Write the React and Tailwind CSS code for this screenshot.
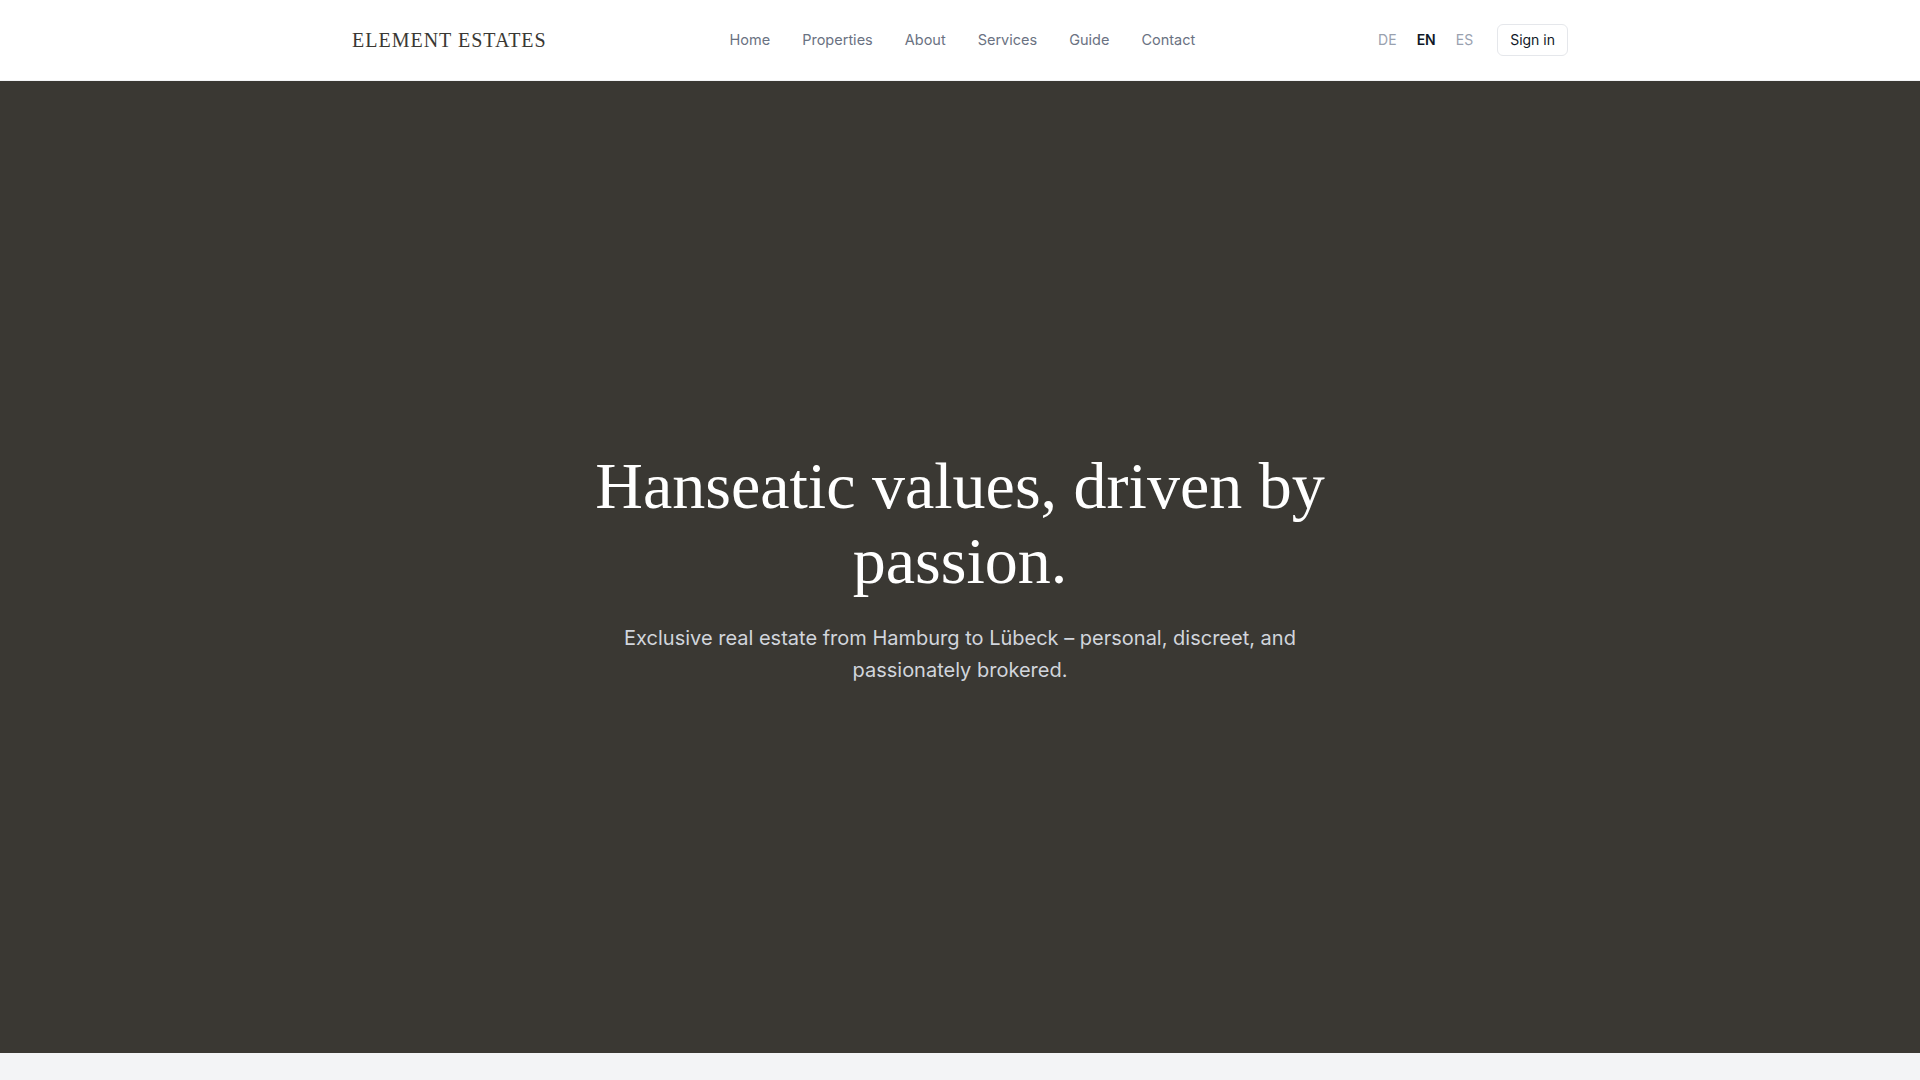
import React from 'react';

const NAV_LINKS = ['Home', 'Properties', 'About', 'Services', 'Guide', 'Contact'];
const LANGS = ['DE', 'EN', 'ES'];

const serif = { fontFamily: '"Liberation Serif", "Times New Roman", serif' };

const Header = () => (
    <header className="bg-white border-b border-gray-100">
        <div className="max-w-7xl mx-auto px-8 h-20 flex items-center justify-between">
            <a href="#" className="text-xl tracking-wider text-[#3a3833]" style={serif}>
                ELEMENT ESTATES
            </a>

            <nav className="flex items-center gap-8">
                {NAV_LINKS.map((link) => (
                    <a key={link} href="#" className="text-[14.5px] text-gray-500 hover:text-gray-900 transition">
                        {link}
                    </a>
                ))}
            </nav>

            <div className="flex items-center gap-6">
                <div className="flex items-center gap-5">
                    {LANGS.map((lang) => (
                        <button
                            key={lang}
                            className={`text-sm cursor-pointer ${lang === 'EN' ? 'text-gray-900 font-semibold' : 'text-gray-400'}`}
                        >
                            {lang}
                        </button>
                    ))}
                </div>
                <button className="h-8 px-3 text-sm text-gray-900 border border-gray-200 rounded-md bg-white cursor-pointer">
                    Sign in
                </button>
            </div>
        </div>
    </header>
);

const Hero = () => (
    <section className="bg-[#3a3833] min-h-[90vh] flex items-center justify-center">
        <div className="max-w-3xl mx-auto px-4 text-center">
            <h1 className="text-[66px] leading-[75px] text-white" style={serif}>
                Hanseatic values, driven by passion.
            </h1>
            <p className="mt-6 text-xl leading-relaxed text-gray-300">
                Exclusive real estate from Hamburg to Lübeck – personal, discreet, and passionately brokered.
            </p>
        </div>
    </section>
);

export default function App() {
    return (
        <div className="min-h-screen bg-gray-100" style={{ fontFamily: 'Inter, "Noto Sans", sans-serif' }}>
            <Header />
            <Hero />
            <section className="h-40 bg-gray-100" />
        </div>
    );
}
